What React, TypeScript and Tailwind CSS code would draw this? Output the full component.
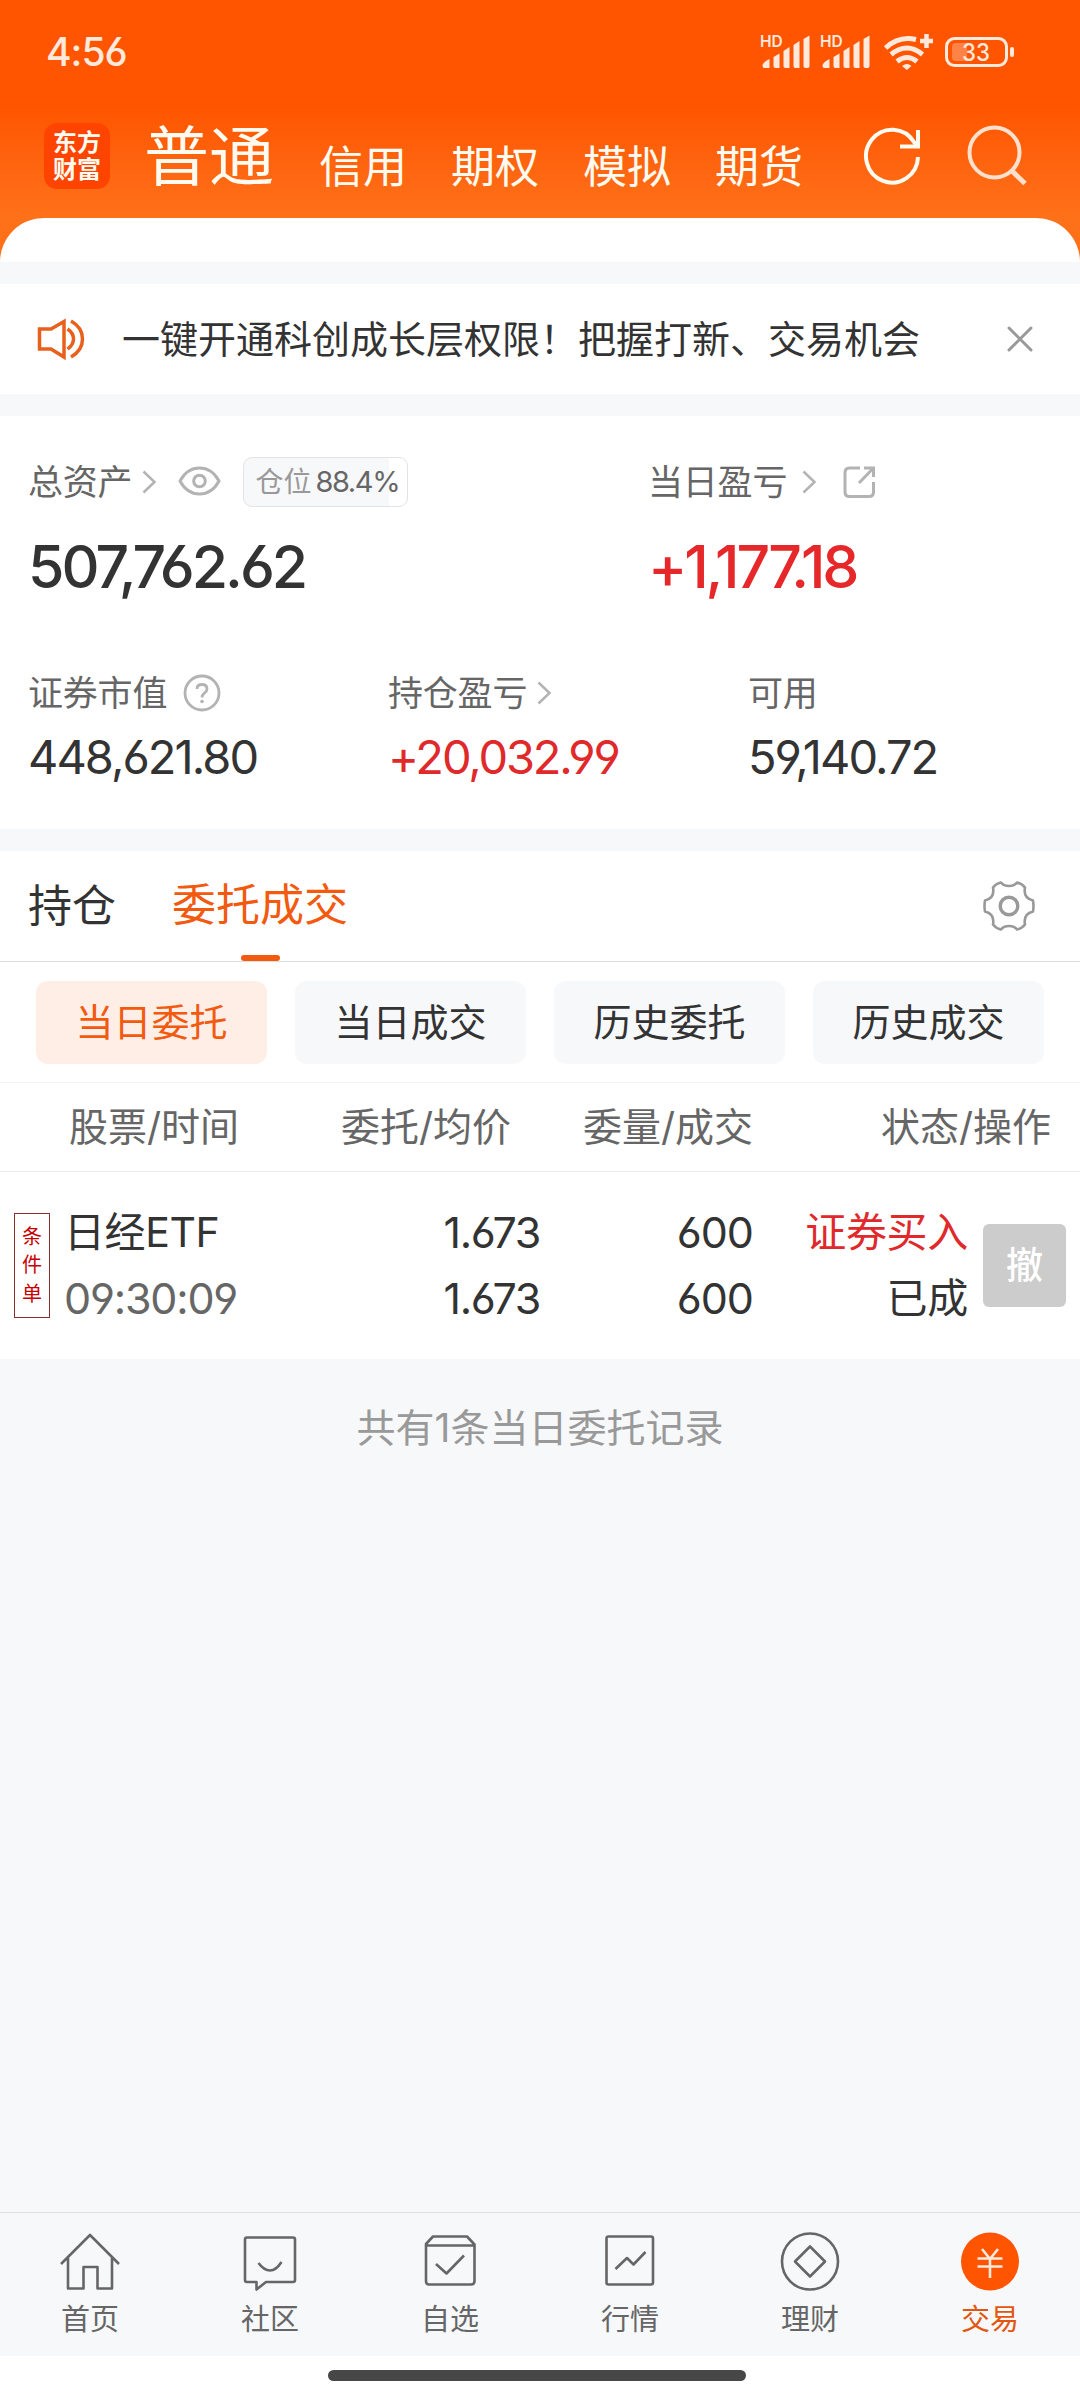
import type { ReactNode } from "react";

const markets = ["信用", "期权", "模拟", "期货"];
const filters = ["当日委托", "当日成交", "历史委托", "历史成交"];

function Signal() {
  return (
    <div className="h-[34px] w-[52px] text-[#ffe9dc]">
      <div className="h-[13px] text-[15.500px] leading-[13px] font-semibold">HD</div>
      <svg className="-mt-[13px]" width="52" height="34" viewBox="0 0 52 34" fill="currentColor">
        <path d="M2.500 30q1-3 7-6v9H4.500q-2 0-2-2.500Z" />
        <path d="M13.500 22l6-3.500v14.500h-4q-2 0-2-2Z" />
        <path d="M23.500 16l6-4v21h-4q-2 0-2-2Z" />
        <path d="M33.500 10l6-4v27h-4q-2 0-2-2Z" />
        <path d="M43.500 4l6-3.500V31q0 2-2 2h-2q-2 0-2-2Z" />
      </svg>
    </div>
  );
}

function Wifi() {
  return (
    <svg width="52" height="38" viewBox="882 32 52 38" fill="none" stroke="#ffe9dc" strokeWidth="5">
      <path d="M885.500 47Q899 34.500 916 38.500" />
      <path d="M891 53.500Q907 40.500 922.500 53.500" />
      <path d="M897 60.500Q907 52.500 917 60.500" />
      <path d="M902 65Q907 61 911.500 65L906.800 69Z" fill="#ffe9dc" stroke="none" />
      <path d="M926.500 33v14M920 40h13" strokeWidth="4.500" />
    </svg>
  );
}

function Chevron() {
  return (
    <svg width="15" height="24" viewBox="0 0 15 24" fill="none" stroke="#b3b3b3" strokeWidth="2.500">
      <path d="M1.500 1.500 12.500 12 1.500 22.500" />
    </svg>
  );
}

function Stat({ label, value, red, icon }: { label: string; value: string; red?: boolean; icon?: ReactNode }) {
  return (
    <div className="w-[360px] shrink-0">
      <div className="flex h-[46px] items-center text-[35px] leading-[46px] tracking-[-0.2px] text-[#666]">
        {label}
        {icon}
      </div>
      <div
        className={`mt-[18px] h-[46px] text-[47px] leading-[46px] ${
          red ? "tracking-[-2.150px] text-[#e0292b]" : "tracking-[-1.950px] text-[#333]"
        }`}
      >
        {value}
      </div>
    </div>
  );
}

const navItems = [
  {
    label: "首页",
    icon: <path d="M1 32 30 3l29 29M8 26v30.500h15.500V35h14v21.500H52V26" />,
  },
  {
    label: "社区",
    icon: (
      <>
        <path d="M7 5.500h46q2 0 2 2V48q0 2-2 2H26l-9.500 7.500V50H7q-2 0-2-2V7.500q0-2 2-2Z" />
        <path d="M18.500 31Q24 38.500 30 38.500T41.500 30" />
      </>
    ),
  },
  {
    label: "自选",
    icon: (
      <>
        <path d="M6 12 13 4.500h34l7.500 8V49q0 3.500-3.500 3.500H9q-3 0-3-3.500ZM6 13.500h48.500" />
        <path d="M16 32l10.500 9.500L44 23.500" />
      </>
    ),
  },
  {
    label: "行情",
    icon: (
      <>
        <rect x="6.500" y="4.500" width="46.500" height="48" rx="2" />
        <path d="M15.500 37 27 26l6.500 6.500L45.500 20" />
      </>
    ),
  },
  {
    label: "理财",
    icon: (
      <>
        <circle cx="30" cy="29.500" r="28" />
        <path d="M30 14.500 45 29.500 30 44.500 15 29.500Z" />
      </>
    ),
  },
  {
    label: "交易",
    icon: (
      <>
        <circle cx="30" cy="29.500" r="29" fill="#ff5500" stroke="none" />
        <path d="M22 17l8 10 8-10M17.500 26.500h25M17.500 34.500h25M30 27v19" stroke="#ffe9dc" strokeLinecap="butt" />
      </>
    ),
  },
];

export default function App() {
  return (
    <div className="flex h-[2400px] w-[1080px] flex-col overflow-hidden bg-[#f7f8fa] whitespace-nowrap text-[#333] [font-family:Inter,'Noto_Sans_CJK_SC',sans-serif] [font-feature-settings:'cv03','cv04']">
      <header className="flex h-[262px] shrink-0 flex-col bg-linear-to-b from-[#ff5500] from-[108px] to-[#ff7119] to-[218px]">
        {/* status bar */}
        <div className="flex h-[103px] items-center pl-[46px] text-[#ffe9dc]">
          <span className="w-[714px] text-[39px] leading-[40px] font-medium tracking-[-1px]">4:56</span>
          <div className="flex items-center pt-px">
            <Signal />
            <div className="w-2" />
            <Signal />
            <div className="w-2.5" />
            <Wifi />
            <svg className="ml-[9px]" width="72" height="34" viewBox="943 34 72 34">
              <rect x="946.500" y="37.500" width="60" height="27" rx="8" fill="none" stroke="#ffe9dc" strokeWidth="3" />
              <path d="M967 42v18h-11q-4 0-4-4v-10q0-4 4-4Z" fill="#ff8247" />
              <rect x="1010" y="46" width="4" height="10" rx="2" fill="#ffe9dc" />
              <text x="962" y="60" fontSize="24.500" fontWeight="500" fill="#ffe9dc" textLength="28" lengthAdjust="spacingAndGlyphs">
                33
              </text>
            </svg>
          </div>
        </div>

        <div className="flex h-[115px] text-[#fffbf0]">
          <div className="mt-5 ml-11 flex h-[66px] w-[66px] flex-col items-center justify-center rounded-[13px] bg-[#ff4400] text-[24px] leading-[27px] font-bold">
            <span>东方</span>
            <span>财富</span>
          </div>
          <div className="mt-[14px] ml-[34px] text-[65px] leading-[80px]">普通</div>
          <div className="mt-[34px] ml-[45px] flex gap-11 text-[44px] leading-[60px]">
            {markets.map((m) => (
              <span key={m}>{m}</span>
            ))}
          </div>
          <svg className="mt-[22px] ml-[58px]" width="62" height="62" viewBox="861 125 62 62" fill="none" stroke="currentColor" strokeWidth="4">
            <path d="M918 157A26 26.500 0 1 1 914 142L918 147" />
            <path d="M918 130v16.500h-18" />
          </svg>
          <svg className="ml-[43px] mt-[20px]" width="64" height="64" viewBox="966 123 64 64" fill="none" stroke="#ffe0cc" strokeWidth="4">
            <circle cx="994.500" cy="152.500" r="25" />
            <path d="M1012 171l13 12.500" strokeWidth="5" />
          </svg>
        </div>
        <div className="h-[44px] rounded-t-[44px] bg-white" />
      </header>

      {/* notice */}
      <section className="mt-[22px] flex h-[110px] shrink-0 items-center bg-white">
        <svg className="ml-9" width="50" height="44" viewBox="36 318 50 44" fill="none" stroke="#e8601c" strokeWidth="3.500">
          <path d="M39.500 330H51L64 322.500V358L51 350H39.500Z" />
          <path d="M67.500 330Q73.500 334 73.500 340T67.500 350" />
          <path d="M71 322Q82.500 328.500 82.500 340T71 358" />
        </svg>
        <span className="ml-9 w-[884px] text-[38px]">一键开通科创成长层权限！把握打新、交易机会</span>
        <svg className="mt-0.5" width="28" height="28" viewBox="0 0 28 28" stroke="#999" strokeWidth="3" strokeLinecap="round">
          <path d="M3 2 25 24M25 2 3 24" />
        </svg>
      </section>

      {/* assets */}
      <section className="mt-[22px] h-[413px] shrink-0 bg-white pt-[39px] pl-7">
        <div className="flex">
          <div className="w-[620px]">
            <div className="flex h-[54px] items-center text-[35px] text-[#666]">
              <span className="mr-2.5 tracking-[-0.2px]">总资产</span>
              <Chevron />
              <svg className="ml-5 -mt-0.5" width="44" height="32" viewBox="0 0 44 32" fill="none" stroke="#b3b3b3" strokeWidth="3">
                <path d="M3 16Q10 3 22.500 3T42 16Q35 29 22.500 29T3 16Z" />
                <circle cx="22.500" cy="16" r="5.800" />
              </svg>
              <div className="ml-[22px] flex h-[50px] w-[165px] items-center rounded-[9px] border border-[#e2e3e5] bg-linear-to-r from-[#f7f8fa] from-[145px] to-white to-[145px] pl-[11px]">
                <span className="text-[28px] text-[#999]">仓位</span>
                <span className="ml-1 text-[29px] tracking-[-1.400px]">88.4%</span>
              </div>
            </div>
            <div className="mt-7 h-[60px] text-[59px] leading-[60px] font-[450] tracking-[-3px]">507,762.62</div>
          </div>
          <div>
            <div className="flex h-[54px] items-center text-[35px] text-[#666]">
              <span className="mr-[15px] tracking-[-0.2px]">当日盈亏</span>
              <Chevron />
              <svg className="ml-[25px]" width="34" height="34" viewBox="0 0 34 34" fill="none" stroke="#b3b3b3" strokeWidth="3">
                <path d="M18 3H7.500Q3 3 3 7.500V27Q3 31.500 7.500 31.500H27Q31.500 31.500 31.500 27V17" />
                <path d="M22 3h9.500v9M31 3.500 17 18" />
              </svg>
            </div>
            <div className="mt-7 h-[60px] text-[59px] leading-[60px] font-[450] tracking-[-3.150px] text-[#e6282a]">+1,177.18</div>
          </div>
        </div>
        <div className="mt-[73px] flex">
          <Stat
            label="证券市值"
            value="448,621.80"
            icon={
              <svg className="ml-[15px] -mt-px" width="40" height="40" viewBox="0 0 40 40" fill="none" stroke="#b3b3b3" strokeWidth="2.800">
                <circle cx="20" cy="20" r="17" />
                <path d="M15 16Q15 11.500 20 11.500T25 16Q25 18 22.500 20T20 24.500" />
                <circle cx="20" cy="28.500" r="1.800" fill="#b3b3b3" stroke="none" />
              </svg>
            }
          />
          <Stat label="持仓盈亏" value="+20,032.99" red icon={<div className="ml-2.5"><Chevron /></div>} />
          <Stat label="可用" value="59,140.72" />
        </div>
      </section>

      {/* orders */}
      <section className="mt-[22px] flex h-[508px] shrink-0 flex-col bg-white">
        <div className="flex h-[111px] items-center border-b border-[#dedede] pl-7 text-[44px]">
          <span>持仓</span>
          <div className="ml-14 flex h-[111px] flex-col items-center text-[#f25a10]">
            <span className="h-[104px] leading-[108px]">委托成交</span>
            <i className="h-[6px] w-[39px] rounded-full bg-[#f25a10]" />
          </div>
          <svg className="ml-[634px]" width="54" height="54" viewBox="-27 -27 54 54" fill="none" stroke="#999" strokeWidth="2.600" strokeLinejoin="round">
            <path d="M-8-23.500Q-5.500-20 0-20T8-23.500Q13-22.500 16-18.500Q14-8 24-5.500Q25 0 24 5.500Q14 8 16 18.500Q13 22.500 8 23.500Q5.500 20 0 20T-8 23.500Q-13 22.500-16 18.500Q-14 8-24 5.500Q-25 0-24-5.500Q-14-8-16-18.500Q-13-22.500-8-23.500Z" />
            <circle r="8.800" strokeWidth="3.400" />
          </svg>
        </div>
        <div className="flex h-[121px] gap-7 border-b border-[#f4f4f4] px-9 pt-[19px]">
          {filters.map((f, i) => (
            <div
              key={f}
              className={`flex h-[83px] w-[231px] items-center justify-center rounded-xl text-[38px] ${
                i === 0 ? "bg-[#ffeee6] text-[#f25a10]" : "bg-[#f7f8fa]"
              }`}
            >
              {f}
            </div>
          ))}
        </div>
        <div className="flex h-[89px] items-center border-b border-[#ebebeb] pl-[69px] text-[39px] text-[#666]">
          <span className="w-[272px]">股票/时间</span>
          <span className="w-[242px]">委托/均价</span>
          <span className="w-[298px]">委量/成交</span>
          <span>状态/操作</span>
        </div>
        <div className="flex pt-[41px] text-[41px] leading-[66px]">
          <div className="ml-3.5 flex h-[105px] w-9 flex-col items-center justify-center border border-[#8a2f2f] text-[20px] leading-[28.500px] text-[#c80000]">
            <span>条</span>
            <span>件</span>
            <span>单</span>
          </div>
          <div className="-mt-3.5 ml-3.5 w-[280px]">
            <div className="tracking-[-0.4px]">日经ETF</div>
            <div className="text-[43px] tracking-[-1.200px] text-[#666]">09:30:09</div>
          </div>
          <div className="-mt-3.5 w-[196px] text-right text-[43px] tracking-[-1.400px]">
            <div>1.673</div>
            <div>1.673</div>
          </div>
          <div className="-mt-3.5 w-[213px] text-right text-[43px] tracking-[-1px]">
            <div>600</div>
            <div>600</div>
          </div>
          <div className="-mt-3.5 w-[215px] text-right tracking-[-0.3px]">
            <div className="text-[#e0292b]">证券买入</div>
            <div>已成</div>
          </div>
          <div className="mt-[11px] ml-[15px] h-[83px] w-[83px] rounded-[6px] bg-[#ccc] text-center text-[37px] leading-[84px] font-medium text-white">撤</div>
        </div>
      </section>

      <p className="pt-[44px] text-center text-[39px] leading-[50px] text-[#999]">共有1条当日委托记录</p>

      {/* bottom nav */}
      <nav className="mt-auto grid h-[144px] shrink-0 grid-cols-6 border-t border-[#dfe0e2]">
        {navItems.map((item) => (
          <div key={item.label} className={`flex flex-col items-center ${item.label === "交易" ? "text-[#e2560f]" : "text-[#666]"}`}>
            <svg className="mt-[19px]" width="60" height="60" viewBox="0 0 60 60" fill="none" stroke="currentColor" strokeWidth="2.600" strokeLinejoin="round">
              {item.icon}
            </svg>
            <span className="mt-2 text-[29px] leading-[40px]">{item.label}</span>
          </div>
        ))}
      </nav>
      <div className="h-11 shrink-0 bg-white pt-3.5 pl-[328px]">
        <div className="h-[11px] w-[418px] rounded-full bg-[#474747]" />
      </div>
    </div>
  );
}
